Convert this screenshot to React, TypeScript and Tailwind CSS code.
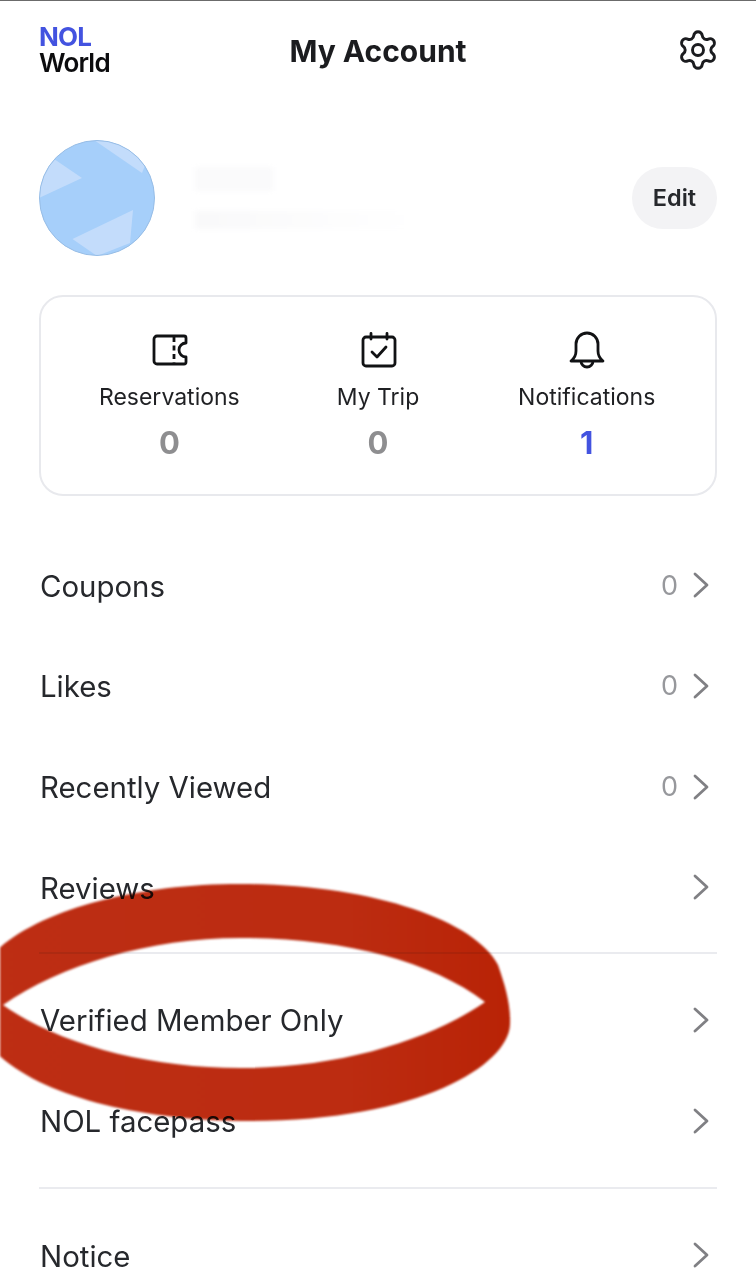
import React from "react";
import { Settings } from "lucide-react";

function Chevron() {
  return (
    <svg width="16" height="26" viewBox="0 0 16 26" fill="none" stroke="#808084" strokeWidth="2.8" strokeLinecap="round" strokeLinejoin="round" className="-mt-[2px]">
      <path d="M2 2 L14 13 L2 24" />
    </svg>
  );
}

function Row({ label, count }: { label: string; count?: string }) {
  return (
    <div className="flex h-[100.67px] items-center justify-between pl-[1px] pr-[8px]">
      <span className="text-[29.4px] leading-none text-[#26282c]">{label}</span>
      <div className="flex items-center gap-[15px]">
        {count && <span className="-mt-[2px] text-[27px] leading-none text-[#97989c]">{count}</span>}
        <Chevron />
      </div>
    </div>
  );
}

function Stat({ label, value, accent, icon }: { label: string; value: string; accent?: boolean; icon: React.ReactNode }) {
  return (
    <div className="flex w-[209px] flex-col items-center">
      <div className="flex h-[40px] items-center justify-center">{icon}</div>
      <div className="mt-[12px] text-[23px] leading-[30px] text-[#1f2023]">{label}</div>
      <div className={`mt-[15px] text-[31px] font-bold leading-[32px] ${accent ? "text-[#4353e0]" : "text-[#8e8e90]"}`}>{value}</div>
    </div>
  );
}

export default function App() {
  return (
    <div className="relative h-[1280px] w-[756px] overflow-hidden border-t border-[#6b6b6b] bg-white font-['Inter',sans-serif]">
      <header className="grid h-[103px] grid-cols-[1fr_auto_1fr] items-start px-[39px]">
        <div className="mt-[23px] text-[26px] font-semibold leading-[26px] tracking-[-0.8px]">
          <div className="font-bold text-[#4353e0]">NOL</div>
          <div className="text-[#0c0c0e]">World</div>
        </div>
        <h1 className="mt-[32px] text-[30px] font-bold leading-[36px] text-[#1b1c1f]">My Account</h1>
        <Settings size={44} strokeWidth={1.6} className="-mr-[3px] mt-[27px] justify-self-end text-[#1b1c1f]" />
      </header>

      <section className="mt-[35px] flex h-[118px] items-center justify-between px-[39px]">
        <div className="flex items-center gap-[40px]">
          <svg width="116" height="116" viewBox="0 0 116 116">
            <defs>
              <clipPath id="av"><circle cx="58" cy="58" r="57.5" /></clipPath>
            </defs>
            <circle cx="58" cy="58" r="57.5" fill="#a6cffa" />
            <g clipPath="url(#av)" fill="#c3dcfb">
              <path d="M55 0 L103 33 L116 0 Z" />
              <path d="M16.5 20 L43 38 L0 58 L0 20 Z" />
              <path d="M94 70 L91 103 L58 116 L33.5 99 Z" />
            </g>
            <circle cx="58" cy="58" r="57.5" fill="none" stroke="#97bde6" strokeWidth="1" />
          </svg>
          <div className="flex flex-col gap-[20px] blur-[2px]">
            <div className="h-[24px] w-[78px] bg-[#fafafb]" />
            <div className="h-[18px] w-[220px] bg-gradient-to-r from-[#f9f9fa] to-white" />
          </div>
        </div>
        <button className="flex h-[62px] w-[85px] items-center justify-center rounded-full bg-[#f3f3f5] text-[23.5px] font-semibold text-[#26282c]">
          Edit
        </button>
      </section>

      <section className="mx-[39px] mt-[38px] flex h-[201px] items-start rounded-[24px] border-2 border-[#e8e9ed] px-[24px] pt-[33px]">
        <Stat
          label="Reservations"
          value="0"
          icon={
            <svg width="36" height="32" viewBox="0 0 36 32" fill="none" stroke="#111214" strokeWidth="2.8" strokeLinejoin="round" className="ml-[1px]">
              <path d="M5 2 H32 a2 2 0 0 1 2 2 V9 a7 7 0 0 0 0 14 V28 a2 2 0 0 1 -2 2 H5 a3 3 0 0 1 -3 -3 V5 a3 3 0 0 1 3 -3 Z" />
              <path d="M22 3 V29" strokeDasharray="5 3.5" />
            </svg>
          }
        />
        <Stat
          label="My Trip"
          value="0"
          icon={
            <svg width="36" height="36" viewBox="0 0 36 36" fill="none" stroke="#111214" strokeWidth="2.8" strokeLinecap="round" strokeLinejoin="round" className="ml-[1px]">
              <rect x="2" y="5" width="32" height="29" rx="3" />
              <path d="M10 1.5 V7 M26 1.5 V7" />
              <path d="M11 20 L16 25 L25 15" />
            </svg>
          }
        />
        <Stat
          label="Notifications"
          value="1"
          accent
          icon={
            <svg width="36" height="38" viewBox="0 0 36 38" fill="none" stroke="#111214" strokeWidth="2.8" strokeLinejoin="round">
              <path d="M2 30 Q7 26 7 20 V13 a11 11 0 0 1 22 0 V20 Q29 26 34 30 Z" />
              <path d="M12 30 a6 6 0 0 0 12 0" />
            </svg>
          }
        />
      </section>

      <main className="mt-[40px] px-[39px]">
        <Row label="Coupons" count="0" />
        <Row label="Likes" count="0" />
        <Row label="Recently Viewed" count="0" />
        <Row label="Reviews" />
        <div className="mb-[17px] mt-[13px] h-[2px] bg-[#eaebef]" />
        <Row label="Verified Member Only" />
        <Row label="NOL facepass" />
        <div className="mb-[17px] mt-[15px] h-[2px] bg-[#eaebef]" />
        <Row label="Notice" />
      </main>

      <svg
        className="absolute left-0 top-[-1px] mix-blend-multiply blur-[1px]"
        width="756"
        height="1280"
        viewBox="0 0 756 1280"
      >
        <defs>
          <linearGradient id="ring" x1="0" x2="1" y1="0" y2="0">
            <stop offset="0" stopColor="#bd2e14" />
            <stop offset="0.7" stopColor="#bc2c11" />
            <stop offset="1" stopColor="#b92306" />
          </linearGradient>
        </defs>
        <path
          fillRule="evenodd"
          fill="url(#ring)"
          d="M-30 1000 C-25 930 100 884 240 884 C370 884 475 920 498 965 C505 985 511 1005 510 1025 C508 1065 420 1121 250 1121 C110 1121 -25 1080 -30 1000 Z M3 1005 C60 965 150 938 240 938 C340 938 430 960 485 1002 C430 1040 340 1068 240 1068 C150 1068 60 1045 3 1005 Z"
        />
      </svg>
    </div>
  );
}
